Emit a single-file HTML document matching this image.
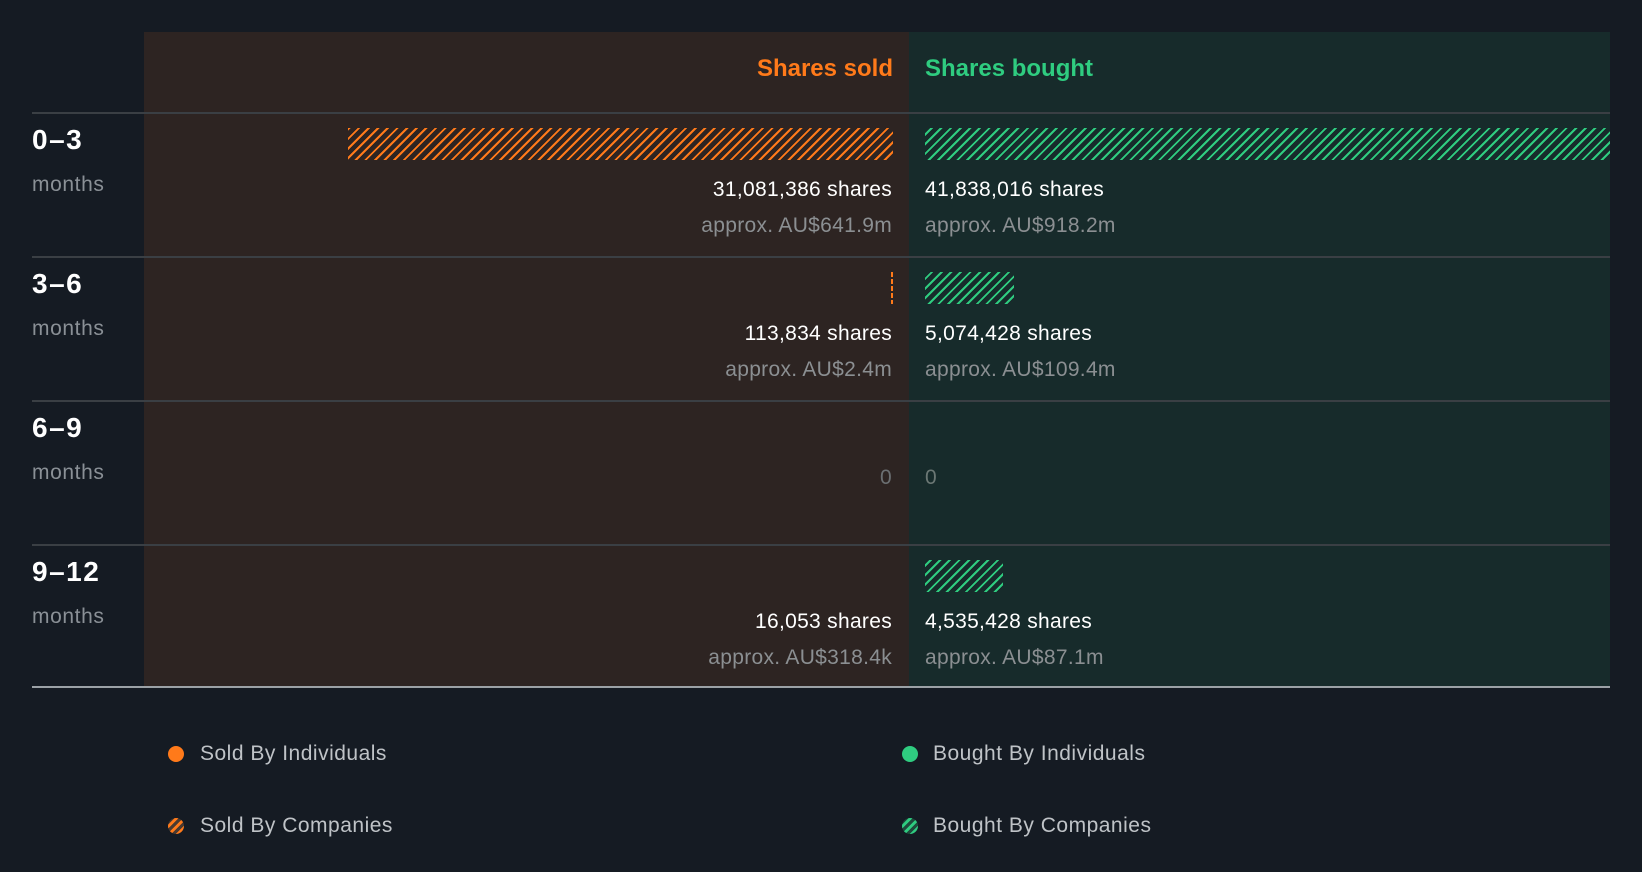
<!DOCTYPE html>
<html><head><meta charset="utf-8"><style>
*{margin:0;padding:0;box-sizing:border-box}
body{width:1642px;height:872px;background:#151b23;font-family:"Liberation Sans",sans-serif;position:relative;overflow:hidden}
.a{position:absolute;white-space:nowrap}
.pl{left:144px;width:765px;top:32px;height:655px;background:#2d2422}
.pr{left:909px;width:701px;top:32px;height:655px;background:#172b2b}
.line{left:32px;width:1578px;height:2px;background:#3a3f44}
.lab{left:32px;color:#fff;font-weight:bold;font-size:28px;letter-spacing:1.5px}
.mon{left:32px;color:#8a9096;font-size:21px;letter-spacing:0.6px}
.sh{color:#fff;font-size:21px;letter-spacing:0.3px}
.ap{color:#8b8f92;font-size:21px;letter-spacing:0.3px}
.r{right:750px;text-align:right}
.g{left:925px}
.ob{background:repeating-linear-gradient(-45deg,transparent 0 4.8px,#ff7a1a 4.8px 6.8px)}
.gb{background:repeating-linear-gradient(-45deg,transparent 0 4.8px,#2fcc80 4.8px 6.8px)}
.leg{color:#bfc3c7;font-size:21px;letter-spacing:0.5px}
.dot{width:16px;height:16px;border-radius:50%}
</style></head><body>
<div class="a pl"></div><div class="a pr"></div>
<div class="a" style="right:749px;top:55px;color:#ff7a1a;font-weight:bold;font-size:24px">Shares sold</div>
<div class="a g" style="top:55px;color:#2fcc80;font-weight:bold;font-size:24px">Shares bought</div>
<div class="a line" style="top:112px"></div>
<div class="a line" style="top:256px"></div>
<div class="a line" style="top:400px"></div>
<div class="a line" style="top:544px"></div>
<div class="a" style="left:32px;width:1578px;top:686px;height:2px;background:#9ba1a6"></div>

<div class="a lab" style="top:124px">0–3</div><div class="a mon" style="top:173px">months</div>
<div class="a lab" style="top:268px">3–6</div><div class="a mon" style="top:317px">months</div>
<div class="a lab" style="top:412px">6–9</div><div class="a mon" style="top:461px">months</div>
<div class="a lab" style="top:556px">9–12</div><div class="a mon" style="top:605px">months</div>

<div class="a ob" style="left:348px;width:545px;top:128px;height:32px"></div>
<div class="a gb" style="left:925px;width:685px;top:128px;height:32px"></div>
<div class="a sh r" style="top:178px">31,081,386 shares</div>
<div class="a sh g" style="top:178px">41,838,016 shares</div>
<div class="a ap r" style="top:214px">approx. AU$641.9m</div>
<div class="a ap g" style="top:214px">approx. AU$918.2m</div>

<div class="a" style="left:891px;width:2px;top:272px;height:32px;background:repeating-linear-gradient(180deg,#ff7a1a 0 5px,transparent 5px 7px)"></div>
<div class="a gb" style="left:925px;width:89px;top:272px;height:32px"></div>
<div class="a sh r" style="top:322px">113,834 shares</div>
<div class="a sh g" style="top:322px">5,074,428 shares</div>
<div class="a ap r" style="top:358px">approx. AU$2.4m</div>
<div class="a ap g" style="top:358px">approx. AU$109.4m</div>

<div class="a ap r" style="top:466px;color:#6b6f72">0</div>
<div class="a ap g" style="top:466px;color:#6b7774">0</div>

<div class="a gb" style="left:925px;width:78px;top:560px;height:32px"></div>
<div class="a sh r" style="top:610px">16,053 shares</div>
<div class="a sh g" style="top:610px">4,535,428 shares</div>
<div class="a ap r" style="top:646px">approx. AU$318.4k</div>
<div class="a ap g" style="top:646px">approx. AU$87.1m</div>

<div class="a dot" style="left:168px;top:746px;background:#ff7a1a"></div>
<div class="a leg" style="left:200px;top:742px">Sold By Individuals</div>
<div class="a dot" style="left:168px;top:818px;background:repeating-linear-gradient(-45deg,#4a3a30 0 3px,#ff7a1a 3px 6px)"></div>
<div class="a leg" style="left:200px;top:814px">Sold By Companies</div>
<div class="a dot" style="left:902px;top:746px;background:#2fcc80"></div>
<div class="a leg" style="left:933px;top:742px">Bought By Individuals</div>
<div class="a dot" style="left:902px;top:818px;background:repeating-linear-gradient(-45deg,#1e4a3c 0 3px,#2fcc80 3px 6px)"></div>
<div class="a leg" style="left:933px;top:814px">Bought By Companies</div>
</body></html>
